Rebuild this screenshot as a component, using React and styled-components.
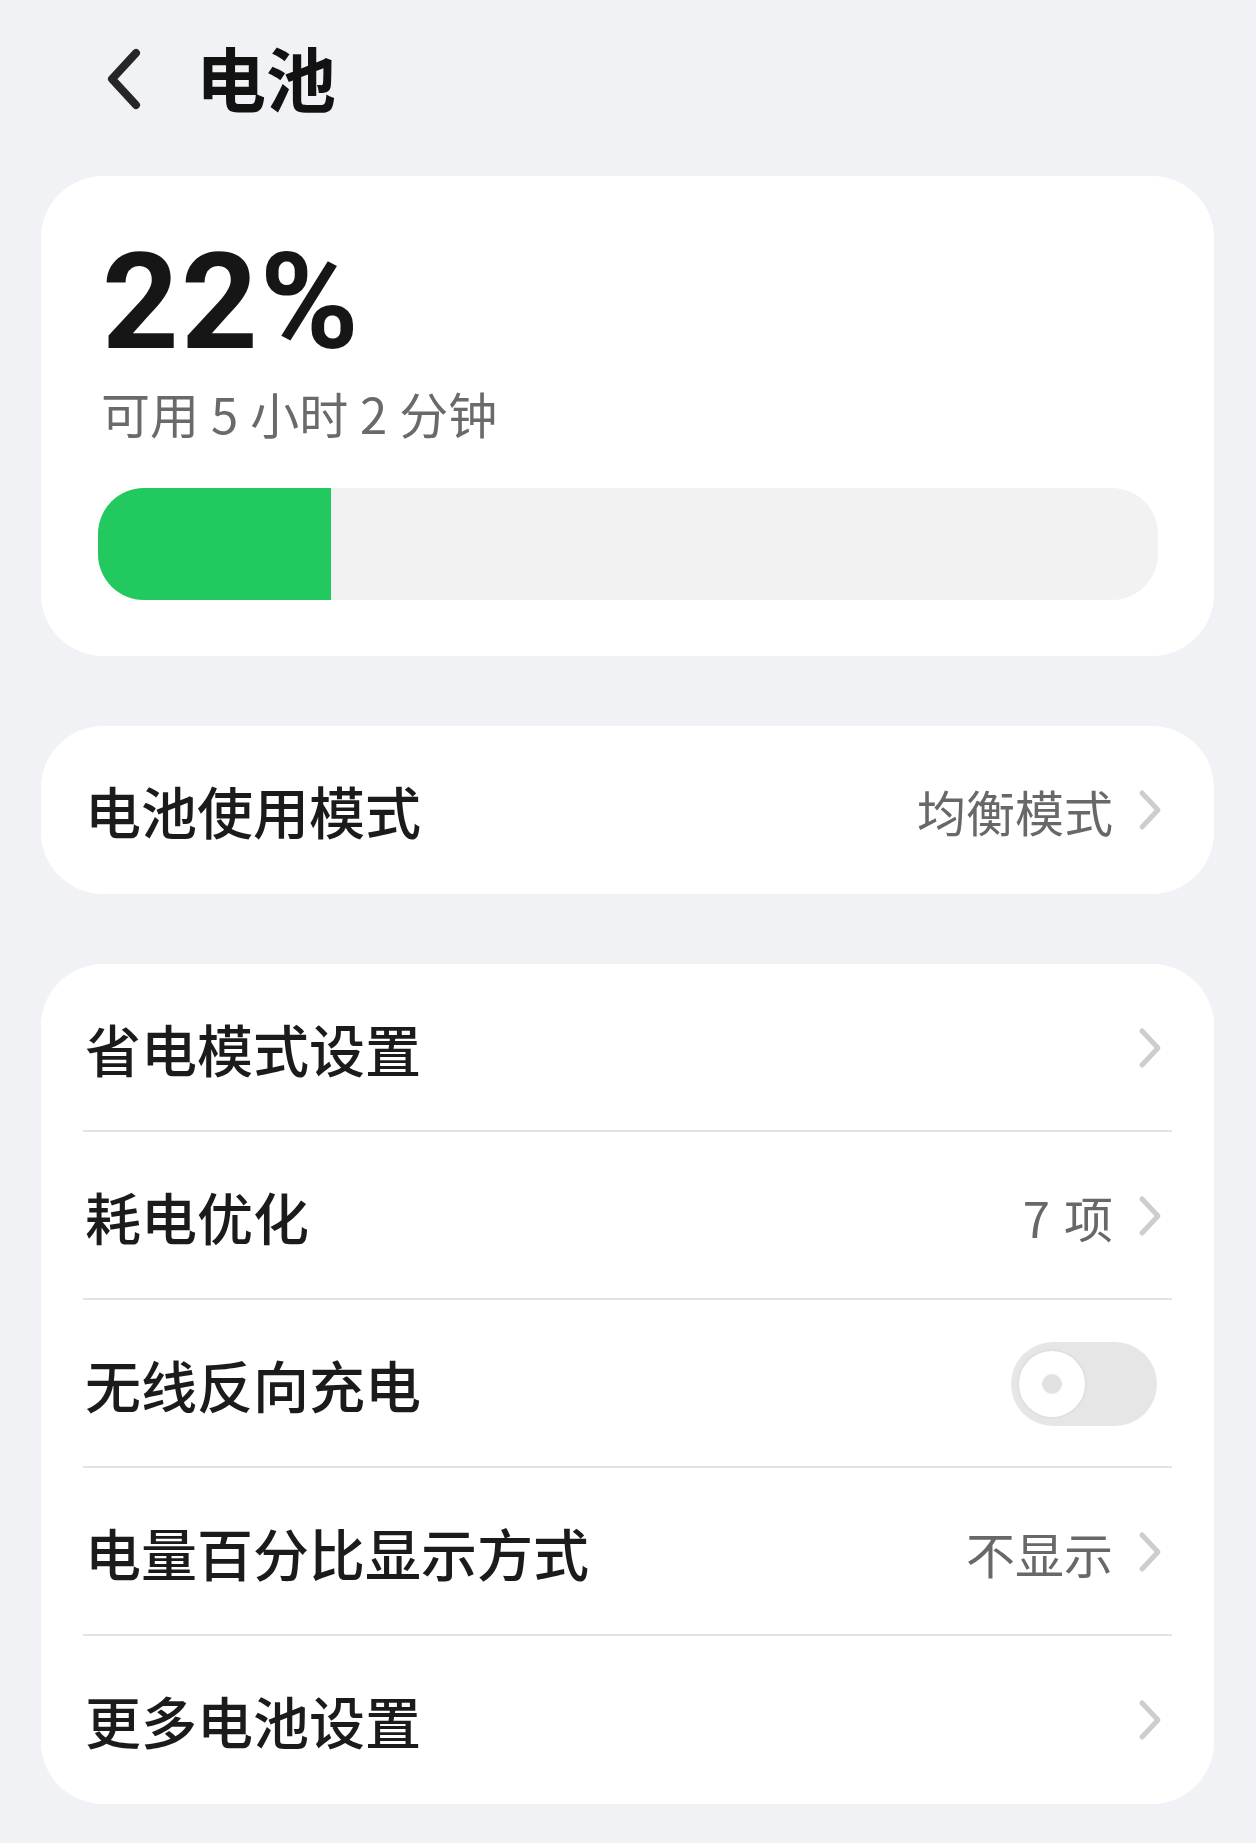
import React from "react";
import styled, { createGlobalStyle } from "styled-components";

const Global = createGlobalStyle`
  html, body {
    margin: 0;
    padding: 0;
    background: #f1f2f6;
  }
  body {
    font-family: "Noto Sans CJK SC", "Noto Sans", sans-serif;
    -webkit-font-smoothing: antialiased;
  }
`;

const Page = styled.div`
  width: 1256px;
  min-height: 1843px;
  box-sizing: border-box;
  background: #f1f2f6;
  padding: 0 42px 39px 41px;
  display: flex;
  flex-direction: column;
`;

const Header = styled.header`
  height: 154px;
  display: flex;
  align-items: center;
  padding-left: 65px;
  gap: 54px;
`;

const BackIcon = styled.svg`
  width: 36px;
  height: 62px;
  flex: none;
  margin-top: 4px;
`;

const Title = styled.h1`
  margin: 0;
  font-size: 70px;
  line-height: 1;
  font-weight: 700;
  color: #121212;
`;

const Stack = styled.div`
  margin-top: 22px;
  display: flex;
  flex-direction: column;
  gap: 70px;
`;

const Card = styled.section`
  background: #ffffff;
  border-radius: 62px;
  overflow: hidden;
`;

const BatteryCard = styled(Card)`
  padding: 60px 56px 56px 57px;
  display: flex;
  flex-direction: column;
`;

const Percent = styled.div`
  font-family: Roboto, "Liberation Sans", sans-serif;
  font-weight: 700;
  font-size: 134px;
  line-height: 1;
  color: #161616;
  padding-left: 4px;
  letter-spacing: 2px;
`;

const Remaining = styled.div`
  margin-top: 18px;
  font-size: 49px;
  line-height: 1;
  color: #6a6a6a;
  padding-left: 3px;
  word-spacing: 1px;
`;

const Track = styled.div`
  margin-top: 51px;
  height: 112px;
  border-radius: 46px;
  background: #f2f2f2;
  overflow: hidden;
  display: flex;
`;

const Fill = styled.div`
  height: 100%;
  background: #22c95e;
`;

const Row = styled.div`
  height: 168px;
  box-sizing: border-box;
  display: flex;
  align-items: center;
  padding: 0 52px 0 44px;
  position: relative;
  ${(p) =>
    p.$divider &&
    `
    &::after {
      content: "";
      position: absolute;
      left: 42px;
      right: 42px;
      bottom: 0;
      height: 2px;
      background: #e4e4e6;
    }
  `}
`;

const Label = styled.span`
  flex: 1;
  font-size: 56px;
  line-height: 1;
  font-weight: 500;
  color: #1b1b1b;
`;

const Value = styled.span`
  font-size: 49px;
  line-height: 1;
  color: #686868;
  margin-right: 25px;
  word-spacing: 3px;
`;

const Chevron = styled.svg`
  width: 24px;
  height: 42px;
  flex: none;
`;

const Toggle = styled.div`
  width: 146px;
  height: 84px;
  border-radius: 42px;
  background: #e6e6e6;
  margin-right: 5px;
  display: flex;
  align-items: center;
  padding-left: 8px;
  box-sizing: border-box;
`;

const Knob = styled.div`
  width: 66px;
  height: 66px;
  border-radius: 50%;
  background: #ffffff;
  box-shadow: 0 0 0 2px #e0e0e0;
  display: flex;
  align-items: center;
  justify-content: center;
`;

const Dot = styled.div`
  width: 20px;
  height: 20px;
  border-radius: 50%;
  background: #e2e2e2;
`;

const ChevronRight = () => (
  <Chevron viewBox="0 0 24 42">
    <path
      d="M4 4 L20 21 L4 38"
      fill="none"
      stroke="#cdcdcd"
      strokeWidth="5"
      strokeLinecap="round"
      strokeLinejoin="round"
    />
  </Chevron>
);

const rows = [
  { label: "省电模式设置" },
  { label: "耗电优化", value: "7 项" },
  { label: "无线反向充电", toggle: true },
  { label: "电量百分比显示方式", value: "不显示" },
  { label: "更多电池设置" },
];

export default function App() {
  const level = 22;
  return (
    <>
      <Global />
      <Page>
        <Header>
          <BackIcon viewBox="0 0 36 62">
            <path
              d="M30 5 L6 31 L30 57"
              fill="none"
              stroke="#262626"
              strokeWidth="8"
              strokeLinecap="round"
              strokeLinejoin="round"
            />
          </BackIcon>
          <Title>电池</Title>
        </Header>
        <Stack>
          <BatteryCard>
            <Percent>22%</Percent>
            <Remaining>可用 5 小时 2 分钟</Remaining>
            <Track>
              <Fill style={{ width: `${level}%` }} />
            </Track>
          </BatteryCard>

          <Card>
            <Row>
              <Label>电池使用模式</Label>
              <Value>均衡模式</Value>
              <ChevronRight />
            </Row>
          </Card>

          <Card>
            {rows.map((r, i) => (
              <Row key={r.label} $divider={i < rows.length - 1}>
                <Label>{r.label}</Label>
                {r.value && <Value>{r.value}</Value>}
                {r.toggle ? (
                  <Toggle>
                    <Knob>
                      <Dot />
                    </Knob>
                  </Toggle>
                ) : (
                  <ChevronRight />
                )}
              </Row>
            ))}
          </Card>
        </Stack>
      </Page>
    </>
  );
}
